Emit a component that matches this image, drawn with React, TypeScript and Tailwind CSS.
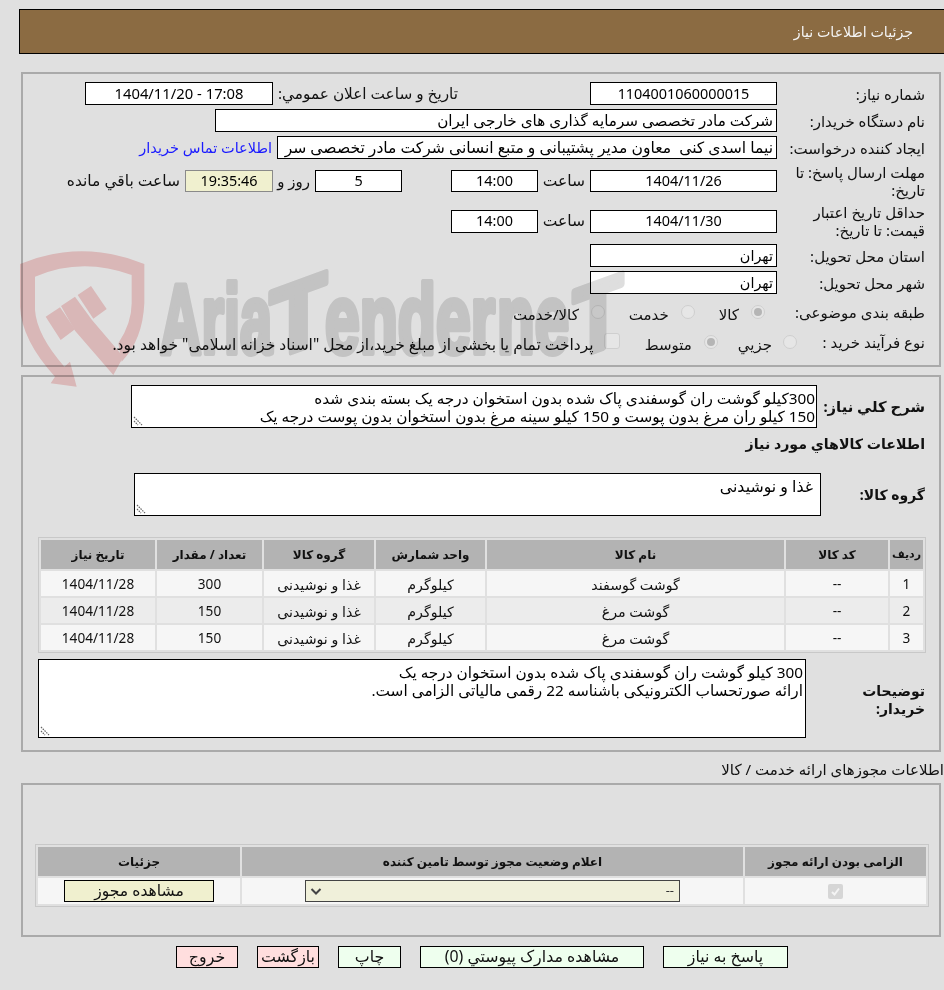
const FONT = "font-['Noto_Sans','DejaVu_Sans',sans-serif]";

function Box({ w, center, h = "h-[23px]", className = "bg-white border-black", size = "text-[14.4px]", children }: { w: string; center?: boolean; h?: string; className?: string; size?: string; children?: React.ReactNode }) {
  return (
    <div className={`${w} ${h} ${className} ${size} shrink-0 border flex items-center overflow-hidden whitespace-pre px-[3px] text-black ${center ? "justify-center" : ""}`}>
      {children}
    </div>
  );
}

function Label({ children }: { children: React.ReactNode }) {
  return <div className="w-[148px] shrink-0 leading-[18px] text-[15px] text-[#111]">{children}</div>;
}

function Grip() {
  return (
    <svg width="10" height="10" viewBox="0 0 10 10" className="absolute left-[1px] bottom-[1px]">
      <path d="M1 1 L9 9 M1 5 L5 9" stroke="#666" strokeWidth="1.2" strokeDasharray="1.5 1" fill="none" />
    </svg>
  );
}

function Radio({ checked }: { checked?: boolean }) {
  return (
    <span className="w-[14px] h-[14px] rounded-full border border-[#cfcfcf] bg-[#e6e6e6] flex items-center justify-center shrink-0">
      {checked && <span className="w-[8px] h-[8px] rounded-full bg-[#b5b5b5]" />}
    </span>
  );
}

function MarkText({ x, y = 339, len, skew, children }: { x: number; y?: number; len: number; skew?: boolean; children: string }) {
  return (
    <text
      transform={skew ? `translate(${x} ${y}) skewY(-20)` : `translate(${x} ${y})`}
      direction="ltr"
      fontFamily="Liberation Sans"
      fontWeight="700"
      fontSize="294"
      fill="#dedede"
      stroke="#dedede"
      strokeWidth="18"
      strokeLinejoin="round"
      textLength={len}
      lengthAdjust="spacingAndGlyphs"
    >
      {children}
    </text>
  );
}

// printed over the page, multiplied so the text and inputs stay readable under it
function Watermark() {
  return (
    <svg width="620" height="160" viewBox="0 0 1860 480" className="absolute left-[10px] top-[240px] pointer-events-none mix-blend-multiply">
      <path
        d="M30 72 Q215 -5 403 72 L403 190 Q398 300 335 365 L325 310 Q365 250 365 190 L365 105 Q215 50 75 110 L75 210 Q80 285 163 380 L180 365 L200 440 L122 430 L135 410 Q35 300 30 200 Z"
        fill="#f7d1d1"
      />
      <path d="M107 230 L150 202 L195 268 L152 300 Z" fill="#f7d1d1" />
      <path d="M203 165 L243 138 L290 207 L250 236 Z" fill="#f7d1d1" />
      <path d="M153 198 L195 170 L246 240 L340 350 L310 405 L195 272 Z" fill="#f7d1d1" />
      <MarkText x={450} len={336}>Aria</MarkText>
      <MarkText x={780} y={360} len={170} skew>T</MarkText>
      <MarkText x={945} len={510}>ender</MarkText>
      <MarkText x={1461} len={216}>ne</MarkText>
      <MarkText x={1689} y={357} len={150} skew>T</MarkText>
    </svg>
  );
}

function GoodsTable() {
  const rows = [
    ["1", "--", "گوشت گوسفند", "کیلوگرم", "غذا و نوشیدنی", "300", "1404/11/28"],
    ["2", "--", "گوشت مرغ", "کیلوگرم", "غذا و نوشیدنی", "150", "1404/11/28"],
    ["3", "--", "گوشت مرغ", "کیلوگرم", "غذا و نوشیدنی", "150", "1404/11/28"],
  ];
  const widths = ["w-[33px]", "w-[102px]", "w-[297px]", "w-[109px]", "w-[110px]", "w-[105px]", "w-[114px]"];
  const heads = ["رديف", "کد کالا", "نام کالا", "واحد شمارش", "گروه کالا", "تعداد / مقدار", "تاریخ نیاز"];
  return (
    <div className="border border-[#c8c8c8] p-[2px] w-[888px] -mr-px mt-[21px] flex flex-col gap-[2px]">
      <div className="flex gap-[2px] h-[29px]">
        {heads.map((t, i) => (
          <div key={t} className={`${widths[i]} ${i === 0 ? "text-[11px]" : "text-[12px]"} bg-[#b3b3b3] flex items-center justify-center font-bold text-[#111] whitespace-nowrap`}>{t}</div>
        ))}
      </div>
      {rows.map((r, ri) => (
        <div key={ri} className="flex gap-[2px] h-[25px]">
          {r.map((c, i) => (
            <div key={i} className={`${widths[i]} ${ri === 1 ? "bg-[#ececec]" : "bg-[#f6f6f6]"} ${i >= 2 && i <= 4 ? "text-[14.2px]" : "text-[13.6px]"} flex items-center justify-center pt-[2px] text-[#111]`}>{c}</div>
          ))}
        </div>
      ))}
    </div>
  );
}

function Btn({ w, pink, children }: { w: string; pink?: boolean; children: React.ReactNode }) {
  return (
    <div className={`${w} h-[22px] border border-black flex items-center justify-center text-[15.8px] text-[#111] ${pink ? "bg-[#ffdede]" : "bg-[#eeffee]"}`}>{children}</div>
  );
}

export default function App() {
  return (
    <div dir="rtl" className={`${FONT} relative w-[944px] h-[990px] bg-[#e0e0e0] overflow-hidden`}>
      <div className="pt-[9px]">
        {/* header */}
        <div className="h-[45px] ml-[19px] bg-[#8b6b42] border-y border-l border-black flex items-center pr-[31px] text-[14.2px] text-[#f4f4f4]">
          جزئیات اطلاعات نیاز
        </div>

        {/* panel 1 */}
        <div className="ml-[21px] mr-[3px] mt-[18px] h-[295px] border-2 border-[#aaa] pr-[14px] pt-[8px] flex flex-col">
          <div className="flex items-center h-[23px]">
            <Label>شماره نیاز:</Label>
            <Box w="w-[187px]" center>1104001060000015</Box>
            <div className="w-[317px] shrink-0 text-[15.3px] text-[#111] pr-[132px] whitespace-nowrap">تاریخ و ساعت اعلان عمومي:</div>
            <Box w="w-[188px]" center size="text-[14.8px]">17:08 - 1404/11/20</Box>
          </div>
          <div className="flex items-center h-[23px] mt-[4px]">
            <Label>نام دستگاه خریدار:</Label>
            <Box w="w-[562px]" size="text-[15.2px]">شرکت مادر تخصصی سرمایه گذاری های خارجی ایران</Box>
          </div>
          <div className="flex items-center h-[23px] mt-[4px]">
            <Label>ایجاد کننده درخواست:</Label>
            <Box w="w-[500px]" size="text-[15.6px]">نیما اسدی کنی  معاون مدیر پشتیبانی و متبع انسانی شرکت مادر تخصصی سر</Box>
            <a className="mr-[5px] text-[14.5px] text-[#1a1aff] whitespace-nowrap">اطلاعات تماس خریدار</a>
          </div>
          <div className="flex items-center h-[36px] mt-[4px]">
            <Label>مهلت ارسال پاسخ: تا تاریخ:</Label>
            <Box w="w-[187px]" center h="h-[22px]">1404/11/26</Box>
            <div className="w-[52px] shrink-0 text-[15.5px] text-[#111] pr-[5px]">ساعت</div>
            <Box w="w-[87px]" center h="h-[22px]">14:00</Box>
            <div className="w-[49px] shrink-0" />
            <Box w="w-[87px]" center h="h-[22px]">5</Box>
            <div className="w-[42px] shrink-0 text-[15px] text-[#111] pr-[5px] whitespace-nowrap">روز و</div>
            <Box w="w-[88px]" center h="h-[22px]" className="bg-[#f0f0cf] border-[#8a8a8a]">19:35:46</Box>
            <div className="mr-[5px] text-[15.5px] text-[#111] whitespace-nowrap">ساعت باقي مانده</div>
          </div>
          <div className="flex items-center h-[36px] mt-[4px]">
            <Label>حداقل تاریخ اعتبار قیمت: تا تاریخ:</Label>
            <Box w="w-[187px]" center>1404/11/30</Box>
            <div className="w-[52px] shrink-0 text-[15.5px] text-[#111] pr-[5px]">ساعت</div>
            <Box w="w-[87px]" center>14:00</Box>
          </div>
          <div className="flex items-center h-[23px] mt-[5px]">
            <Label>استان محل تحویل:</Label>
            <Box w="w-[187px]">تهران</Box>
          </div>
          <div className="flex items-center h-[23px] mt-[4px]">
            <Label>شهر محل تحویل:</Label>
            <Box w="w-[187px]">تهران</Box>
          </div>
          <div className="flex items-center h-[24px] mt-[6px] text-[15px] text-[#111]">
            <Label>طبقه بندی موضوعی:</Label>
            <div className="flex items-center gap-[12px] mr-[12px]"><Radio checked /><span className="pt-[5px]">کالا</span></div>
            <div className="flex items-center gap-[12px] mr-[24px]"><Radio /><span className="pt-[5px]">خدمت</span></div>
            <div className="flex items-center gap-[12px] mr-[24px]"><Radio /><span className="pt-[5px]">کالا/خدمت</span></div>
          </div>
          <div className="flex items-center h-[24px] mt-[6px] text-[15px] text-[#111] whitespace-nowrap">
            <Label>نوع فرآیند خرید :</Label>
            <div className="flex items-center gap-[11px] -mr-[20px]"><Radio /><span className="pt-[5px]">جزيي</span></div>
            <div className="flex items-center gap-[12px] mr-[20px]"><Radio checked /><span className="pt-[5px]">متوسط</span></div>
            <span className="w-[16px] h-[16px] -mt-[3px] mr-[25px] rounded-[3px] border border-[#cfcfcf] bg-[#e6e6e6]" />
            <span className="mr-[10px] pt-[5px] text-[15.5px]">پرداخت تمام یا بخشی از مبلغ خرید،از محل "اسناد خزانه اسلامی" خواهد بود.</span>
          </div>
        </div>

        {/* panel 2 */}
        <div className="ml-[21px] mr-[3px] mt-[8px] h-[377px] border-2 border-[#aaa] pr-[14px] pt-[8px] flex flex-col">
          <div className="flex items-center h-[43px]">
            <div className="w-[108px] shrink-0 text-[14.8px] font-bold text-[#111] whitespace-nowrap">شرح کلي نیاز:</div>
            <div className="relative w-[686px] h-[43px] bg-white border border-black px-[1px] text-[15.3px] leading-[18px] text-black overflow-hidden pt-[3px] whitespace-nowrap">
              300کیلو گوشت ران گوسفندی پاک شده بدون استخوان درجه یک بسته بندی شده
              <br />
              150 کیلو ران مرغ بدون پوست و 150 کیلو سینه مرغ بدون استخوان بدون پوست درجه یک
              <Grip />
            </div>
          </div>
          <div className="h-[18px] mt-[7px] text-[14.2px] font-bold text-[#111] leading-[18px]">اطلاعات کالاهاي مورد نیاز</div>
          <div className="flex items-center h-[43px] mt-[20px]">
            <div className="w-[104px] shrink-0 text-[14px] font-bold text-[#111]">گروه کالا:</div>
            <div className="relative w-[687px] h-[43px] bg-white border border-black pr-[7px] pt-[1px] text-[15.8px] text-black">
              غذا و نوشیدنی
              <Grip />
            </div>
          </div>
          <GoodsTable />
          <div className="flex h-[79px] mt-[6px]">
            <div className="w-[119px] shrink-0 pt-[23px] text-[14px] font-bold text-[#111] leading-[18px] pl-[20px]">توضیحات خریدار:</div>
            <div className="relative w-[768px] h-[79px] bg-white border border-black pr-[2px] pt-[3px] text-[15.3px] leading-[18px] text-black">
              300 کیلو گوشت ران گوسفندی پاک شده بدون استخوان درجه یک
              <br />
              ارائه صورتحساب الکترونیکی باشناسه 22 رقمی مالیاتی الزامی است.
              <Grip />
            </div>
          </div>
        </div>

        {/* licences */}
        <div className="mt-[8px] h-[18px] text-[15px] text-[#111] whitespace-nowrap leading-[18px]">اطلاعات مجوزهای ارائه خدمت / کالا</div>

        <div className="ml-[21px] mr-[3px] mt-[5px] h-[154px] border-2 border-[#aaa] pt-[59px] pr-[10px]">
          <div className="w-[894px] border border-[#c8c8c8] p-[2px] flex flex-col gap-[2px]">
            <div className="flex gap-[2px] h-[29px]">
              <div className="w-[181px] bg-[#b3b3b3] flex items-center justify-center text-[12px] font-bold text-[#111]">الزامی بودن ارائه مجوز</div>
              <div className="w-[501px] bg-[#b3b3b3] flex items-center justify-center text-[12px] font-bold text-[#111]">اعلام وضعیت مجوز توسط تامین کننده</div>
              <div className="w-[202px] bg-[#b3b3b3] flex items-center justify-center text-[12px] font-bold text-[#111]">جزئیات</div>
            </div>
            <div className="flex gap-[2px] h-[26px]">
              <div className="w-[181px] bg-[#f6f6f6] flex items-center justify-center">
                <span className="w-[15px] h-[15px] rounded-[2px] bg-[#d6d6d6] flex items-center justify-center">
                  <svg width="11" height="11" viewBox="0 0 11 11"><path d="M2 6 L4.5 8.5 L9 2.5" stroke="#f4f4f4" strokeWidth="2" fill="none" /></svg>
                </span>
              </div>
              <div className="w-[501px] bg-[#f6f6f6] flex items-center justify-center">
                <div className="w-[375px] h-[22px] bg-[#f0f0da] border border-[#444] flex items-center justify-between pr-[5px] pl-[3px] text-[13px] text-[#333]">
                  <span>--</span>
                  <svg width="14" height="14" viewBox="0 0 14 14"><path d="M2.5 5 L7 9.5 L11.5 5" stroke="#444" strokeWidth="2" fill="none" /></svg>
                </div>
              </div>
              <div className="w-[202px] bg-[#f6f6f6] flex items-center justify-center">
                <div className="w-[150px] h-[22px] bg-[#f0f0cf] border border-black flex items-center justify-center text-[15.6px] text-[#111]">مشاهده مجوز</div>
              </div>
            </div>
          </div>
        </div>

        {/* bottom buttons */}
        <div className="mt-[9px] pr-[156px] flex gap-[19px]">
          <Btn w="w-[125px]">پاسخ به نیاز</Btn>
          <Btn w="w-[224px]">مشاهده مدارک پیوستي (0)</Btn>
          <Btn w="w-[63px]">چاپ</Btn>
          <Btn w="w-[62px]" pink>بازگشت</Btn>
          <Btn w="w-[62px]" pink>خروج</Btn>
        </div>
      </div>
      <Watermark />
    </div>
  );
}
